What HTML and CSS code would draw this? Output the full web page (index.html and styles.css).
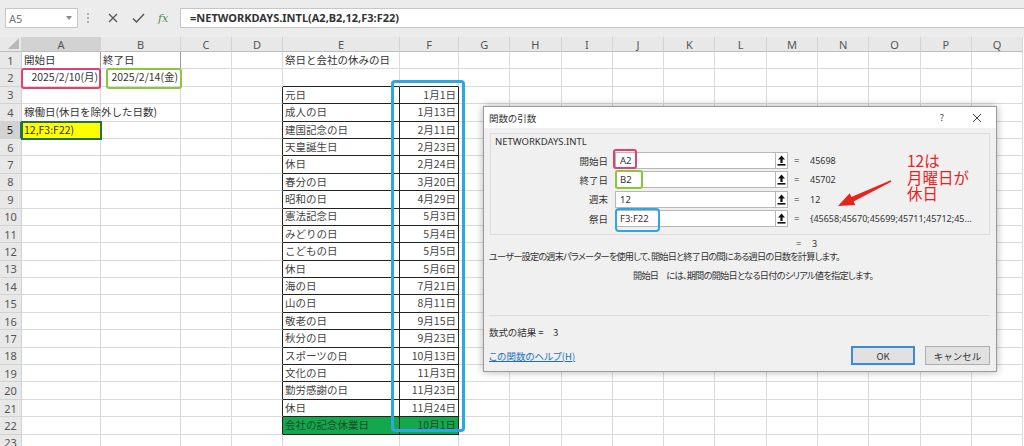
FILE: index.html
```html
<!DOCTYPE html>
<html lang="ja">
<head>
<meta charset="utf-8">
<title>NETWORKDAYS.INTL</title>
<link rel="stylesheet" href="styles.css">
</head>
<body>
<div class="app">
  <div class="fbar">
    <div class="namebox"><span>A5</span><svg class="caret" width="6" height="4" viewBox="0 0 6 4"><path d="M0 0h6L3 4z" fill="#888"/></svg></div>
    <div class="fsep"><i></i><i></i><i></i></div>
    <div class="ficons">
      <svg width="10" height="10" viewBox="0 0 10 10"><path d="M1 1L9 9M9 1L1 9" stroke="#555" stroke-width="1.3" fill="none"/></svg>
      <svg width="13" height="10" viewBox="0 0 13 10"><path d="M1 5.5L4.5 9L12 1" stroke="#555" stroke-width="1.4" fill="none"/></svg>
      <span class="fx">fx</span>
    </div>
    <div class="finput">=NETWORKDAYS.INTL(A2,B2,12,F3:F22)</div>
  </div>

  <table class="sheet">
    <colgroup>
      <col class="c-rh"><col class="c-a"><col class="c-b"><col class="c-n"><col class="c-n"><col class="c-e"><col class="c-f">
      <col class="c-g"><col class="c-g"><col class="c-g"><col class="c-g"><col class="c-g"><col class="c-g"><col class="c-g"><col class="c-g"><col class="c-g"><col class="c-g"><col class="c-g">
    </colgroup>
    <tr class="hdr"><th class="corner"><span class="tri"></span></th><th class="hsel">A</th><th>B</th><th>C</th><th>D</th><th>E</th><th>F</th><th>G</th><th>H</th><th>I</th><th>J</th><th>K</th><th>L</th><th>M</th><th>N</th><th>O</th><th>P</th><th>Q</th></tr>
    <tr><th>1</th><td class="bx">開始日</td><td class="bx">終了日</td><td></td><td></td><td>祭日と会社の休みの日</td><td></td><td></td><td></td><td></td><td></td><td></td><td></td><td></td><td></td><td></td><td></td><td></td></tr>
    <tr><th>2</th><td class="bx r">2025/2/10(月)</td><td class="bx r">2025/2/14(金)</td><td></td><td></td><td class="top"></td><td class="top"></td><td></td><td></td><td></td><td></td><td></td><td></td><td></td><td></td><td></td><td></td><td></td></tr>
    <tr><th>3</th><td></td><td></td><td></td><td class="edge"></td><td class="tb">元日</td><td class="tb r">1月1日</td><td></td><td></td><td></td><td></td><td></td><td></td><td></td><td></td><td></td><td></td><td></td></tr>
    <tr><th>4</th><td>稼働日(休日を除外した日数)</td><td></td><td></td><td class="edge"></td><td class="tb">成人の日</td><td class="tb r">1月13日</td><td></td><td></td><td></td><td></td><td></td><td></td><td></td><td></td><td></td><td></td><td></td></tr>
    <tr><th class="rsel">5</th><td class="a5">12,F3:F22)</td><td></td><td></td><td class="edge"></td><td class="tb">建国記念の日</td><td class="tb r">2月11日</td><td></td><td></td><td></td><td></td><td></td><td></td><td></td><td></td><td></td><td></td><td></td></tr>
    <tr><th>6</th><td></td><td></td><td></td><td class="edge"></td><td class="tb">天皇誕生日</td><td class="tb r">2月23日</td><td></td><td></td><td></td><td></td><td></td><td></td><td></td><td></td><td></td><td></td><td></td></tr>
    <tr><th>7</th><td></td><td></td><td></td><td class="edge"></td><td class="tb">休日</td><td class="tb r">2月24日</td><td></td><td></td><td></td><td></td><td></td><td></td><td></td><td></td><td></td><td></td><td></td></tr>
    <tr><th>8</th><td></td><td></td><td></td><td class="edge"></td><td class="tb">春分の日</td><td class="tb r">3月20日</td><td></td><td></td><td></td><td></td><td></td><td></td><td></td><td></td><td></td><td></td><td></td></tr>
    <tr><th>9</th><td></td><td></td><td></td><td class="edge"></td><td class="tb">昭和の日</td><td class="tb r">4月29日</td><td></td><td></td><td></td><td></td><td></td><td></td><td></td><td></td><td></td><td></td><td></td></tr>
    <tr><th>10</th><td></td><td></td><td></td><td class="edge"></td><td class="tb">憲法記念日</td><td class="tb r">5月3日</td><td></td><td></td><td></td><td></td><td></td><td></td><td></td><td></td><td></td><td></td><td></td></tr>
    <tr><th>11</th><td></td><td></td><td></td><td class="edge"></td><td class="tb">みどりの日</td><td class="tb r">5月4日</td><td></td><td></td><td></td><td></td><td></td><td></td><td></td><td></td><td></td><td></td><td></td></tr>
    <tr><th>12</th><td></td><td></td><td></td><td class="edge"></td><td class="tb">こどもの日</td><td class="tb r">5月5日</td><td></td><td></td><td></td><td></td><td></td><td></td><td></td><td></td><td></td><td></td><td></td></tr>
    <tr><th>13</th><td></td><td></td><td></td><td class="edge"></td><td class="tb">休日</td><td class="tb r">5月6日</td><td></td><td></td><td></td><td></td><td></td><td></td><td></td><td></td><td></td><td></td><td></td></tr>
    <tr><th>14</th><td></td><td></td><td></td><td class="edge"></td><td class="tb">海の日</td><td class="tb r">7月21日</td><td></td><td></td><td></td><td></td><td></td><td></td><td></td><td></td><td></td><td></td><td></td></tr>
    <tr><th>15</th><td></td><td></td><td></td><td class="edge"></td><td class="tb">山の日</td><td class="tb r">8月11日</td><td></td><td></td><td></td><td></td><td></td><td></td><td></td><td></td><td></td><td></td><td></td></tr>
    <tr><th>16</th><td></td><td></td><td></td><td class="edge"></td><td class="tb">敬老の日</td><td class="tb r">9月15日</td><td></td><td></td><td></td><td></td><td></td><td></td><td></td><td></td><td></td><td></td><td></td></tr>
    <tr><th>17</th><td></td><td></td><td></td><td class="edge"></td><td class="tb">秋分の日</td><td class="tb r">9月23日</td><td></td><td></td><td></td><td></td><td></td><td></td><td></td><td></td><td></td><td></td><td></td></tr>
    <tr><th>18</th><td></td><td></td><td></td><td class="edge"></td><td class="tb">スポーツの日</td><td class="tb r">10月13日</td><td></td><td></td><td></td><td></td><td></td><td></td><td></td><td></td><td></td><td></td><td></td></tr>
    <tr><th>19</th><td></td><td></td><td></td><td class="edge"></td><td class="tb">文化の日</td><td class="tb r">11月3日</td><td></td><td></td><td></td><td></td><td></td><td></td><td></td><td></td><td></td><td></td><td></td></tr>
    <tr><th>20</th><td></td><td></td><td></td><td class="edge"></td><td class="tb">勤労感謝の日</td><td class="tb r">11月23日</td><td></td><td></td><td></td><td></td><td></td><td></td><td></td><td></td><td></td><td></td><td></td></tr>
    <tr><th>21</th><td></td><td></td><td></td><td class="edge"></td><td class="tb">休日</td><td class="tb r">11月24日</td><td></td><td></td><td></td><td></td><td></td><td></td><td></td><td></td><td></td><td></td><td></td></tr>
    <tr><th>22</th><td></td><td></td><td></td><td class="edge"></td><td class="tb green">会社の記念休業日</td><td class="tb green r">10月1日</td><td></td><td></td><td></td><td></td><td></td><td></td><td></td><td></td><td></td><td></td><td></td></tr>
    <tr><th>23</th><td></td><td></td><td></td><td></td><td></td><td></td><td></td><td></td><td></td><td></td><td></td><td></td><td></td><td></td><td></td><td></td><td></td></tr>
  </table>

  <div class="hl hl-a2"></div>
  <div class="hl hl-b2"></div>
  <div class="hl hl-f"></div>

  <div class="dialog">
    <div class="dlg-title"><span class="dlg-name">関数の引数</span><span class="dlg-q">?</span><svg class="dlg-x" width="10" height="10" viewBox="0 0 10 10"><path d="M1 1L9 9M9 1L1 9" stroke="#444" stroke-width="1" fill="none"/></svg></div>
    <div class="dlg-group">
      <div class="fn-name">NETWORKDAYS.INTL</div>
      <div class="arg"><span class="arg-label">開始日</span><span class="arg-in">A2</span><span class="arg-btn"><svg width="9" height="11" viewBox="0 0 9 11"><path d="M4.5 0.5L8 4.5H5.6V8H3.4V4.5H1z" fill="#111"/><rect x="0.5" y="9" width="8" height="1.6" fill="#111"/></svg></span><span class="eq">=</span><span class="val">45698</span></div>
      <div class="arg"><span class="arg-label">終了日</span><span class="arg-in">B2</span><span class="arg-btn"><svg width="9" height="11" viewBox="0 0 9 11"><path d="M4.5 0.5L8 4.5H5.6V8H3.4V4.5H1z" fill="#111"/><rect x="0.5" y="9" width="8" height="1.6" fill="#111"/></svg></span><span class="eq">=</span><span class="val">45702</span></div>
      <div class="arg"><span class="arg-label">週末</span><span class="arg-in">12</span><span class="arg-btn"><svg width="9" height="11" viewBox="0 0 9 11"><path d="M4.5 0.5L8 4.5H5.6V8H3.4V4.5H1z" fill="#111"/><rect x="0.5" y="9" width="8" height="1.6" fill="#111"/></svg></span><span class="eq">=</span><span class="val">12</span></div>
      <div class="arg"><span class="arg-label">祭日</span><span class="arg-in">F3:F22</span><span class="arg-btn"><svg width="9" height="11" viewBox="0 0 9 11"><path d="M4.5 0.5L8 4.5H5.6V8H3.4V4.5H1z" fill="#111"/><rect x="0.5" y="9" width="8" height="1.6" fill="#111"/></svg></span><span class="eq">=</span><span class="val">{45658;45670;45699;45711;45712;45...</span></div>
    </div>
    <div class="dlg-res"><span class="eq">=</span><span class="val">3</span></div>
    <p class="desc">ユーザー設定の週末パラメーターを使用して、開始日と終了日の間にある週日の日数を計算します。</p>
    <p class="argdesc"><span class="argdesc-name">開始日</span>には、期間の開始日となる日付のシリアル値を指定します。</p>
    <div class="dlg-foot">
      <div class="result">数式の結果 =　3</div>
      <div class="foot-row">
        <a class="help" href="#">この関数のヘルプ(H)</a>
        <div class="btns"><button class="btn ok">OK</button><button class="btn">キャンセル</button></div>
      </div>
    </div>
  </div>

  <div class="hl hl-d1"></div>
  <div class="hl hl-d2"></div>
  <div class="hl hl-d3"></div>

  <div class="note"><div>12は</div><div>月曜日が</div><div>休日</div></div>
  <svg class="arrow" width="1024" height="446" viewBox="0 0 1024 446">
    <polygon points="890.7,180.3 891.3,181.7 853.6,201.5 855.3,205.1 838,206 849.7,193.3 851.4,196.9" fill="#e8231f"/>
  </svg>
</div>
</body>
</html>
```

FILE: styles.css
```css
* { box-sizing: border-box; }
html, body { margin: 0; padding: 0; }
body {
  background: #fff;
  font-family: "Noto Sans CJK JP", "Noto Sans", sans-serif;
  color: #333;
}
.app {
  position: relative;
  width: 1024px;
  height: 446px;
  overflow: hidden;
  background: #fff;
}

/* formula bar */
.fbar {
  height: 37px;
  background: #ececec;
  display: flex;
  align-items: flex-start;
  padding-top: 8px;
}
.namebox {
  margin-left: 5px;
  width: 73px;
  height: 20px;
  background: #fff;
  border: 1px solid #c6c6c6;
  display: flex;
  align-items: center;
  justify-content: space-between;
  padding: 0 5px 0 3px;
  font-family: "Noto Sans", sans-serif;
  font-size: 11px;
  color: #777;
}
.fsep {
  width: 20px;
  height: 20px;
  display: flex;
  flex-direction: column;
  align-items: center;
  justify-content: center;
  gap: 2px;
}
.fsep i {
  display: block;
  width: 2px;
  height: 2px;
  background: #b0b0b0;
}
.ficons {
  width: 82px;
  height: 20px;
  display: flex;
  align-items: center;
  gap: 14px;
  padding-left: 10px;
}
.fx {
  font-family: "DejaVu Serif", serif;
  font-style: italic;
  font-size: 11px;
  color: #4d8a4d;
  margin-left: -1px;
}
.finput {
  flex: 1;
  height: 20px;
  background: #fff;
  border: 1px solid #c6c6c6;
  border-right: none;
  padding-left: 9px;
  font-family: "Noto Sans", sans-serif;
  font-weight: 700;
  font-size: 11px;
  line-height: 18px;
  color: #333;
}

/* sheet */
.sheet {
  table-layout: fixed;
  width: 1023.3px;
  border-collapse: separate;
  border-spacing: 0;
}
.c-rh { width: 22px; }
.c-a { width: 79px; }
.c-b { width: 80px; }
.c-n { width: 51px; }
.c-e { width: 117px; }
.c-f { width: 59px; }
.c-g { width: 51.3px; }

.sheet tr { height: 17.4px; }
.sheet tr.hdr { height: 15px; }
.sheet th {
  background: #e8e8e8;
  color: #555;
  font-family: "Noto Sans", sans-serif;
  font-weight: 400;
  font-size: 11px;
  line-height: 1;
  padding: 0;
  text-align: center;
  border-right: 1px solid #d2d2d2;
  border-bottom: 1px solid #d2d2d2;
}
.sheet tr.hdr th {
  border-bottom: 1px solid #bdbdbd;
  color: #555;
}
.sheet th.corner {
  position: relative;
  background: #e8e8e8;
}
.tri {
  position: absolute;
  right: 2px;
  bottom: 2px;
  width: 0;
  height: 0;
  border-left: 11px solid transparent;
  border-bottom: 11px solid #b9b9b9;
}
.sheet th.hsel {
  background: #d2d2d2;
  color: #222;
  border-bottom: 2px solid #217346;
}
.sheet th.rsel {
  background: #d2d2d2;
  color: #222;
  border-right: 2px solid #217346;
}
.sheet td {
  padding: 0 2px;
  font-size: 10.5px;
  line-height: 1;
  color: #333;
  white-space: nowrap;
  overflow: visible;
  vertical-align: middle;
  border-right: 1px solid #dadada;
  border-bottom: 1px solid #dadada;
}
.sheet td.r { text-align: right; }
.sheet td.bx { border-right-color: #9a9a9a; }
.sheet td.top { border-bottom: 1px solid #222; }
.sheet td.edge { border-right: 1px solid #222; }
.sheet td.tb {
  border-right: 1px solid #222;
  border-bottom: 1px solid #222;
  color: #444;
}
.sheet td.green { background: #12a84b; color: #1d4a2c; }
.sheet td.a5 {
  background: #ffff00;
  outline: 2px solid #217346;
  outline-offset: -1px;
  color: #333;
}

/* highlight boxes */
.hl {
  position: absolute;
  border: 2px solid;
  border-radius: 3px;
  pointer-events: none;
}
.hl-a2 { left: 21px; top: 68px; width: 80px; height: 21px; border-color: #e2406f; }
.hl-b2 { left: 106px; top: 68px; width: 76px; height: 21px; border-color: #8cc63f; }
.hl-f { left: 391px; top: 80px; width: 74px; height: 352px; border: 3px solid #2ea7e0; border-radius: 4px; }
.hl-d1 { left: 613px; top: 149px; width: 24px; height: 20px; border-color: #e2406f; }
.hl-d2 { left: 615px; top: 170px; width: 28px; height: 19px; border-color: #8cc63f; }
.hl-d3 { left: 615px; top: 208px; width: 45px; height: 24px; border-color: #2ea7e0; border-radius: 4px; }

/* dialog */
.dialog {
  position: absolute;
  left: 483px;
  top: 106px;
  width: 514px;
  height: 266px;
  background: #f0f0f0;
  border: 1px solid #9a9a9a;
  box-shadow: 0 0 8px rgba(0, 0, 0, 0.3);
  font-size: 9.5px;
  color: #333;
  font-feature-settings: "palt";
}
.dlg-title {
  height: 21px;
  background: #fff;
  display: flex;
  align-items: center;
  padding-left: 5px;
  padding-right: 14px;
}
.dlg-name { flex: 1; font-size: 9.5px; }
.dlg-q { font-size: 9px; color: #444; margin-right: 28px; }
.dlg-group {
  margin: 5px 6px 0 6px;
  height: 102px;
  border: 1px solid #dcdcdc;
  background: #f0f0f0;
  padding-top: 1px;
}
.fn-name {
  height: 14px;
  line-height: 14px;
  padding-left: 4px;
  font-family: "Noto Sans", sans-serif;
  font-size: 9.5px;
  margin-bottom: 2px;
}
.arg {
  height: 19.3px;
  display: flex;
  align-items: center;
}
.arg-label {
  width: 117px;
  text-align: right;
  margin-right: 7px;
}
.arg-in {
  width: 160px;
  height: 17px;
  background: #fff;
  border: 1px solid #b7b7b7;
  border-right: none;
  padding-left: 4px;
  font-family: "Noto Sans", sans-serif;
  font-size: 9.5px;
  line-height: 15px;
}
.arg-btn {
  width: 13px;
  height: 17px;
  background: #fff;
  border: 1px solid #b7b7b7;
  display: flex;
  align-items: center;
  justify-content: center;
}
.eq {
  font-family: "Noto Sans", sans-serif;
  font-size: 9.5px;
  margin-left: 6px;
  width: 16px;
}
.val {
  font-family: "Noto Sans", sans-serif;
  font-size: 9px;
  white-space: nowrap;
}
.dlg-res {
  margin-top: 1px;
  height: 14px;
  display: flex;
  align-items: center;
  padding-left: 306px;
}
.desc {
  margin: 0;
  height: 13px;
  line-height: 13px;
  padding-left: 5px;
  font-size: 9.2px;
  letter-spacing: -0.8px;
  white-space: nowrap;
}
.argdesc {
  margin: 5px 0 0 0;
  height: 14px;
  line-height: 14px;
  padding-left: 149px;
  font-size: 9.2px;
  letter-spacing: -0.75px;
  white-space: nowrap;
}
.argdesc-name { margin-right: 8px; }
.dlg-foot {
  margin: 33px 6px 0 5px;
  border-top: 1px solid #dcdcdc;
}
.result {
  margin-top: 9px;
  height: 14px;
  line-height: 14px;
}
.foot-row {
  margin-top: 7px;
  display: flex;
  align-items: center;
  justify-content: space-between;
}
.help {
  color: #1a6fc4;
  text-decoration: underline;
  font-size: 9.5px;
}
.btns { display: flex; gap: 10px; }
.btn {
  height: 19px;
  width: 65px;
  background: #e1e1e1;
  border: 1px solid #adadad;
  font-family: "Noto Sans CJK JP", "Noto Sans", sans-serif;
  font-size: 9.5px;
  color: #333;
  padding: 0;
}
.btn.ok {
  width: 64px;
  border: 2px solid #3c8ad8;
}

/* annotation */
.note {
  position: absolute;
  left: 907px;
  top: 152px;
  font-size: 15.5px;
  color: #e8231f;
}
.note div {
  height: 16.5px;
  line-height: 16.5px;
}
.arrow {
  position: absolute;
  left: 0;
  top: 0;
  pointer-events: none;
}
```
